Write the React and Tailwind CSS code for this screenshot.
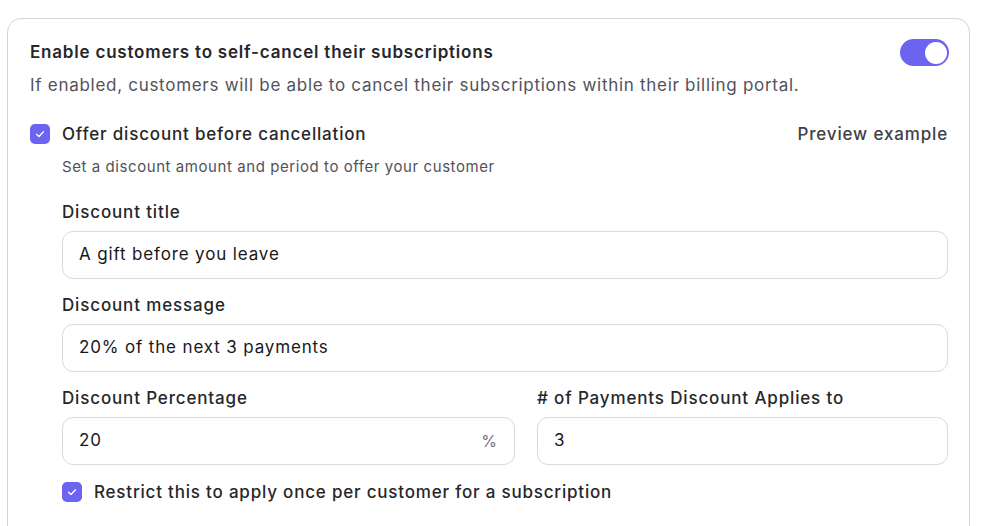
import React from 'react'

const Check = ({ size = 20 }) => (
  <span
    className="flex shrink-0 items-center justify-center rounded-[5px] bg-[#6c63f0]"
    style={{ width: size, height: size }}
  >
    <svg width="12" height="12" viewBox="0 0 12 12" fill="none">
      <path d="M2.5 6.2 L5 8.5 L9.5 3.8" stroke="white" strokeWidth="1.3" strokeLinecap="round" strokeLinejoin="round" />
    </svg>
  </span>
)

const Field = ({ label, value, suffix, className = '' }) => (
  <div className={className}>
    <div className="pt-px text-[17px] leading-6 font-medium tracking-[0.05em] text-[#27272a]">{label}</div>
    <div className="mt-[7px] flex h-[48px] items-center rounded-[11px] border border-[#d9d9de] bg-white pl-[16px] pr-[17px]">
      <span className="flex-1 text-[17px] tracking-[0.05em] text-[#18181b]">{value}</span>
      {suffix && <span className="text-[16px] text-[#71717a]">{suffix}</span>}
    </div>
  </div>
)

export default function App() {
  return (
    <div className="min-h-screen bg-white pl-[7px] pt-[18px]" style={{ fontFamily: 'Inter, "Noto Sans", sans-serif' }}>
      <div className="w-[963px] h-[600px] rounded-t-[14px] border border-[#d4d4d8] pl-[22px] pr-[20px] pt-[20px]">
        <div className="flex h-[27px] items-center justify-between">
          <div className="text-[17px] font-semibold tracking-[0.047em] text-[#27272a]">Enable customers to self-cancel their subscriptions</div>
          <div className="flex h-[27px] w-[49px] items-center justify-end rounded-full bg-[#6c63f0] pr-[2px]">
            <div className="h-[22px] w-[22px] rounded-full bg-white"></div>
          </div>
        </div>
        <div className="mt-[7px] text-[17px] leading-6 tracking-[0.042em] text-[#52525b]">
          If enabled, customers will be able to cancel their subscriptions within their billing portal.
        </div>

        <div className="mt-[25px] flex items-center justify-between">
          <div className="flex items-center gap-3">
            <Check />
            <span className="text-[17px] leading-6 font-medium tracking-[0.048em] text-[#27272a]">Offer discount before cancellation</span>
          </div>
          <span className="pr-px text-[17px] leading-6 font-medium tracking-[0.05em] text-[#3f3f46]">Preview example</span>
        </div>

        <div className="pl-8 pr-px">
          <div className="mt-[11px] text-[15px] leading-5 tracking-[0.038em] text-[#52525b]">Set a discount amount and period to offer your customer</div>
          <Field className="mt-[22px]" label="Discount title" value="A gift before you leave" />
          <Field className="mt-[13px]" label="Discount message" value="20% of the next 3 payments" />
          <div className="mt-[13px] grid grid-cols-[453px_1fr] gap-[22px]">
            <Field label="Discount Percentage" value="20" suffix="%" />
            <Field label="# of Payments Discount Applies to" value="3" />
          </div>
          <div className="mt-[15px] flex items-center gap-3">
            <Check />
            <span className="text-[17px] leading-6 font-medium tracking-[0.047em] text-[#27272a]">Restrict this to apply once per customer for a subscription</span>
          </div>
        </div>
      </div>
    </div>
  )
}
